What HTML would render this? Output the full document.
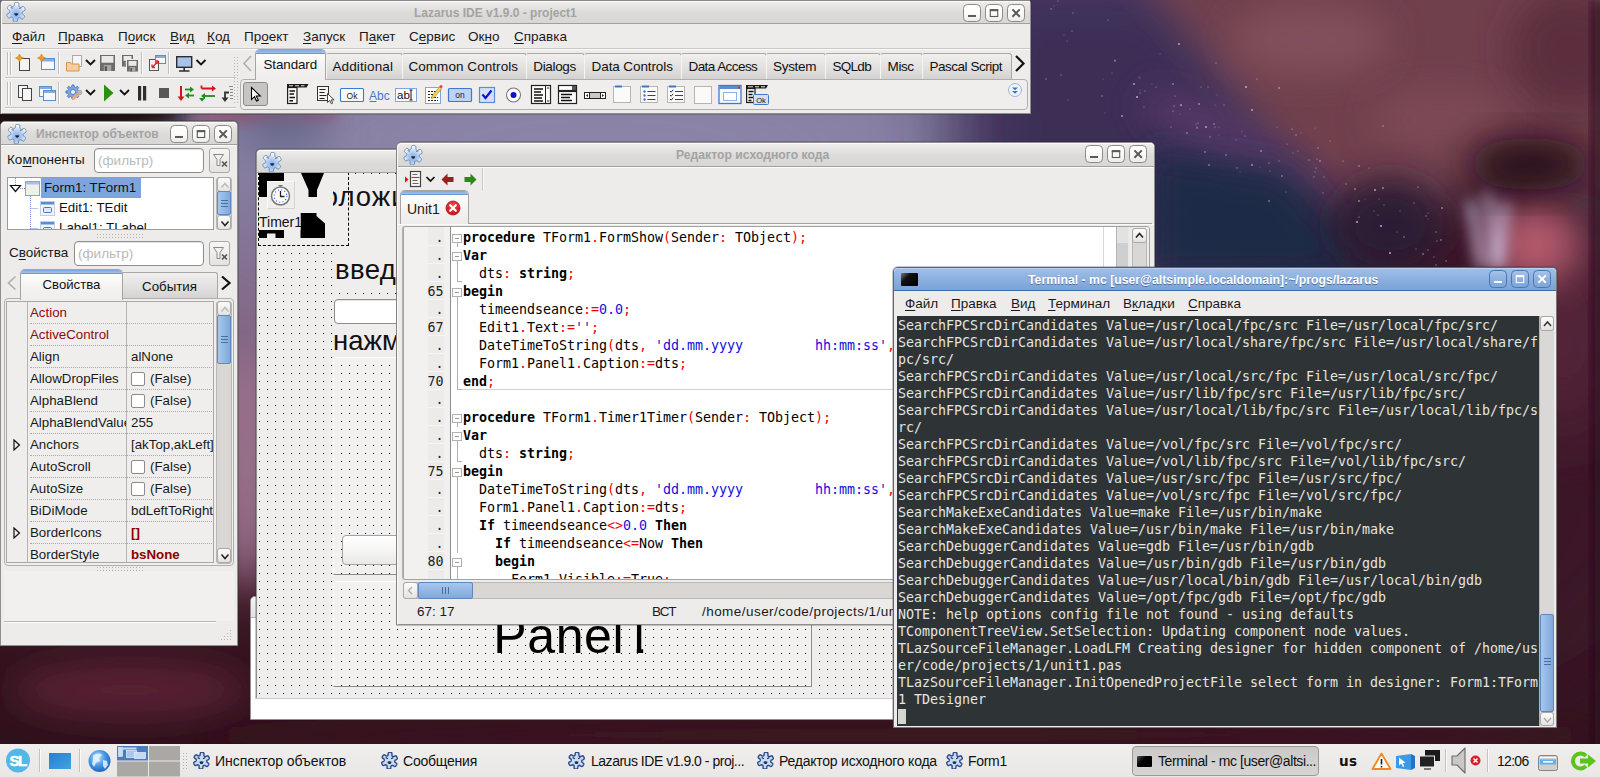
<!DOCTYPE html>
<html lang="ru">
<head>
<meta charset="utf-8">
<title>Lazarus IDE v1.9.0 - project1</title>
<style>
*{box-sizing:border-box;margin:0;padding:0}
html,body{width:1600px;height:777px;overflow:hidden}
body{position:relative;font-family:"Liberation Sans","DejaVu Sans",sans-serif;font-size:13.5px;color:#111;background:#2a1119}
.abs{position:absolute}
u{text-decoration:underline;text-underline-offset:2px}
/* wallpaper */
#wall{position:absolute;left:0;top:0;width:1600px;height:777px;overflow:hidden;background:#2a1119}
/* generic window */
.win{position:absolute;background:#edeceb;border:1px solid #8f8f8f;border-radius:5px 5px 0 0;box-shadow:0 0 0 1px rgba(40,40,40,.25)}
.tb{position:absolute;left:0;top:0;right:0;height:23px;border-radius:4px 4px 0 0;background:linear-gradient(#efeeec 0,#dcdbd9 55%,#d8d7d5 100%);border-bottom:1px solid #a3a09b;box-shadow:inset 0 1px 0 #fbfbfa}
.tt{position:absolute;left:0;right:0;top:4px;text-align:center;font-weight:bold;font-size:12.5px;color:#a3a3a3;white-space:nowrap}
.wb{color:#5a5a5a;position:absolute;top:3px;width:18px;height:18px;border:1px solid #8d8a85;border-radius:4.500px;background:linear-gradient(#ffffff,#fbfbfa 50%,#ecebea)}
.wb svg{position:absolute;left:0;top:0}
.lz{position:absolute;width:20px;height:20px}

.tmenu span{position:absolute;top:3px;font-size:13.5px;color:#1a1a1a;white-space:nowrap}
#tscr pre{position:absolute;left:1px;top:1px;font-family:"DejaVu Sans Mono","Liberation Mono",monospace;font-size:13.33px;line-height:17px;letter-spacing:-0.0243px;color:#e4e4e2;white-space:pre}
.cur{background:#d3d7cf}
.sbtn{position:absolute;left:0;width:14px;height:15px;border:1px solid #a9a8a6;border-radius:3px;background:linear-gradient(#fcfcfc,#e4e3e2)}
.sbtn svg{position:absolute;left:0;top:0}

#code .cl{position:absolute;left:0;height:18px;width:699px;white-space:pre;font-family:"DejaVu Sans Mono","Liberation Mono",monospace;font-size:13.33px;line-height:18px;letter-spacing:-0.0243px;color:#000}
#code em{position:absolute;left:0;width:39.500px;text-align:right;font-style:normal;color:#222}
#code tt{position:absolute;left:59px;font-family:inherit}
#code i{font-style:normal}
#code i.s{color:#f00000}
#code i.n,#code i.q{color:#1010e0}
#code s{position:absolute;text-decoration:none}
#code s.fb{left:48px;top:5px;width:9.500px;height:9.500px;border:1px solid #b0b0b0;background:#fff}
#code s.fb:after{content:"";position:absolute;left:3.500px;top:8px;width:1px;height:4px;background:#b0b0b0}
#code s.fb:before{content:"";position:absolute;left:1.500px;top:3.200px;width:4.500px;height:1px;background:#999}
#code s.fl{left:52.500px;top:0;width:1px;height:18px;background:#b0b0b0}
#code s.fe{left:52.500px;top:0;width:5.500px;height:17px;border-left:1px solid #b0b0b0;border-bottom:1px solid #b0b0b0}
.sbar span{position:absolute;top:4px;font-size:13.5px;color:#1a1a1a;white-space:nowrap}

.mmenu span{position:absolute;top:4px;font-size:13.5px;color:#1a1a1a;white-space:nowrap}
.ptab{position:absolute;top:53px;height:26px;border:1px solid #a9a8a6;border-bottom:0;border-left-color:#f4f4f3;border-radius:3px 3px 0 0;background:linear-gradient(#f1f0ef,#dddcda 70%,#d3d2d0);font-size:13.5px;line-height:25px;text-align:left;color:#111;white-space:nowrap;z-index:1}

.lb{font-size:13.5px;color:#1a1a1a;white-space:nowrap}
.inp{border:1px solid #8f8e8c;border-radius:4px;background:#fff;box-shadow:inset 0 1px 1px rgba(0,0,0,.12)}
.inp span{position:absolute;left:3px;top:4px;font-size:13.5px;color:#b9b9b9}
.fbtn{border:1px solid #a9a8a6;border-radius:3px;background:linear-gradient(#f6f6f5,#e4e3e2)}
.fbtn svg{position:absolute;left:0;top:0}
.tv{font-size:13.3px;color:#111;white-space:nowrap;line-height:18px}
.dots{background-image:radial-gradient(circle,#b5b4b2 .6px,transparent .8px);background-size:3px 3px}
.pr{position:absolute;left:0;width:208px;height:22px;font-size:13.3px;line-height:21px;color:#1a1a1a;white-space:nowrap}
.pr .pn{position:absolute;left:23px;top:0;width:96px;height:22px;overflow:hidden;border-bottom:1px dotted #aaa9a7}
.pr .pn.red{color:#8e0c0c}
.pr .pv{position:absolute;left:120px;top:0;width:87px;height:22px;overflow:hidden;padding-left:4px;border-bottom:1px dotted #aaa9a7}
.pr .rd{color:#8b0000}
.cb{position:absolute;left:4px;top:4px;width:14px;height:14px;border:1px solid #8c8b89;border-radius:2px;background:#fff;text-decoration:none}

.gdots{background-image:linear-gradient(#000,#000);background-size:1px 1px;background-repeat:no-repeat;background-image:radial-gradient(circle at .5px .5px,#000 .55px,rgba(0,0,0,0) .75px);background-size:8px 8px;background-repeat:repeat;background-color:#efeeed}
.big{font-size:27.5px;line-height:34px;color:#111;white-space:nowrap}

.tk{position:absolute;top:8px;font-size:14px;line-height:18px;color:#111;white-space:nowrap}
</style>
</head>
<body>
<div id="wall"><svg width="1600" height="777" viewBox="0 0 1600 777">
<defs>
<filter id="b80" x="-50%" y="-50%" width="200%" height="200%"><feGaussianBlur stdDeviation="70"/></filter>
<filter id="b40" x="-50%" y="-50%" width="200%" height="200%"><feGaussianBlur stdDeviation="36"/></filter>
<filter id="b20" x="-50%" y="-50%" width="200%" height="200%"><feGaussianBlur stdDeviation="18"/></filter>
<filter id="b12" x="-50%" y="-50%" width="200%" height="200%"><feGaussianBlur stdDeviation="11"/></filter>
<filter id="b5" x="-50%" y="-50%" width="200%" height="200%"><feGaussianBlur stdDeviation="4.500"/></filter>
<filter id="b8" x="-50%" y="-50%" width="200%" height="200%"><feGaussianBlur stdDeviation="7"/></filter>
<linearGradient id="wbase" x1="0" y1="0" x2="0" y2="1"><stop offset="0" stop-color="#6b5f8c"/><stop offset=".2" stop-color="#7f789b"/><stop offset=".5" stop-color="#84607f"/><stop offset=".72" stop-color="#4a2334"/><stop offset=".85" stop-color="#32121d"/><stop offset="1" stop-color="#2c1019"/></linearGradient>
</defs>
<rect width="1600" height="777" fill="url(#wbase)"/>
<ellipse cx="600" cy="150" rx="400" ry="120" fill="#8c85a7" filter="url(#b80)"/>
<ellipse cx="40" cy="112" rx="150" ry="30" fill="#1e0811" filter="url(#b12)"/>
<ellipse cx="265" cy="114" rx="75" ry="9" fill="#94506a" filter="url(#b8)"/>
<ellipse cx="285" cy="128" rx="45" ry="22" fill="#66678a" filter="url(#b20)"/>
<ellipse cx="1420" cy="420" rx="330" ry="330" fill="#3b1626" filter="url(#b80)"/>
<ellipse cx="246" cy="470" rx="26" ry="120" fill="#9c748f" filter="url(#b20)"/>
<ellipse cx="130" cy="690" rx="120" ry="28" fill="#5a2434" filter="url(#b20)"/>
<ellipse cx="900" cy="735" rx="700" ry="14" fill="#3d1824" filter="url(#b12)"/>
<path d="M960 -40h230l150 260-240 80h-150z" fill="#3c2d57" filter="url(#b40)"/>
<path d="M1105 -60h545v260l-150-40-60 50-125-15-70-95z" fill="#70404d" filter="url(#b20)"/>
<ellipse cx="1570" cy="50" rx="60" ry="60" fill="#5c2d3c" filter="url(#b20)"/>
<ellipse cx="1440" cy="120" rx="70" ry="30" fill="#7e4a57" filter="url(#b20)"/>
<ellipse cx="1240" cy="150" rx="110" ry="22" fill="#5b3b69" filter="url(#b20)" transform="rotate(28 1240 150)"/>
<ellipse cx="1310" cy="40" rx="80" ry="35" fill="#82505c" filter="url(#b20)"/>
<ellipse cx="1565" cy="330" rx="45" ry="110" fill="#5a273c" filter="url(#b40)"/>
<path d="M1150 150l140 20 90 110h-230z" fill="#1b2b47" filter="url(#b20)"/>
<ellipse cx="1390" cy="225" rx="55" ry="45" fill="#291a36" filter="url(#b20)"/>
<ellipse cx="1535" cy="245" rx="45" ry="40" fill="#b25a6c" filter="url(#b20)"/>
<path d="M1470 200l12 68M1488 190l8 80M1506 200l-6 68" stroke="#d0c4e6" stroke-width="8" fill="none" opacity=".85" filter="url(#b8)"/>
<ellipse cx="1530" cy="164" rx="62" ry="26" fill="#260c19" filter="url(#b20)"/>
<rect x="1593" y="0" width="10" height="777" fill="#2a0f1a" filter="url(#b8)"/>
<g fill="#d9c8ee"><circle cx="1197" cy="127" r="0.5" opacity="0.8"/><circle cx="1152" cy="84" r="0.6" opacity="0.4"/><circle cx="1224" cy="105" r="0.6" opacity="0.7"/><circle cx="1316" cy="168" r="0.5" opacity="0.9"/><circle cx="1073" cy="13" r="0.6" opacity="0.7"/><circle cx="1245" cy="136" r="0.5" opacity="0.7"/><circle cx="1286" cy="192" r="0.5" opacity="0.7"/><circle cx="1269" cy="163" r="0.7" opacity="0.6"/><circle cx="1416" cy="249" r="0.6" opacity="0.7"/><circle cx="1115" cy="61" r="0.7" opacity="0.8"/><circle cx="1173" cy="84" r="0.9" opacity="0.5"/><circle cx="1208" cy="87" r="0.5" opacity="0.8"/><circle cx="1296" cy="135" r="0.7" opacity="0.7"/><circle cx="1237" cy="168" r="0.7" opacity="0.6"/><circle cx="1355" cy="189" r="0.9" opacity="0.5"/><circle cx="1199" cy="104" r="0.9" opacity="0.6"/><circle cx="1279" cy="161" r="0.7" opacity="0.5"/><circle cx="1105" cy="113" r="0.5" opacity="0.5"/><circle cx="1206" cy="127" r="0.9" opacity="0.8"/><circle cx="1137" cy="97" r="0.9" opacity="0.9"/><circle cx="1112" cy="73" r="0.6" opacity="0.4"/><circle cx="1397" cy="232" r="0.6" opacity="0.6"/><circle cx="1139" cy="77" r="0.5" opacity="0.6"/><circle cx="1442" cy="208" r="0.9" opacity="0.6"/><circle cx="1180" cy="114" r="0.6" opacity="0.4"/><circle cx="1140" cy="90" r="0.5" opacity="0.5"/><circle cx="1219" cy="135" r="0.5" opacity="0.4"/><circle cx="1102" cy="96" r="0.7" opacity="0.7"/><circle cx="1261" cy="151" r="0.9" opacity="0.6"/><circle cx="1197" cy="128" r="0.7" opacity="0.6"/><circle cx="1314" cy="177" r="0.7" opacity="0.5"/><circle cx="1298" cy="151" r="0.5" opacity="0.7"/><circle cx="1140" cy="93" r="0.6" opacity="0.7"/><circle cx="1359" cy="217" r="0.6" opacity="0.8"/><circle cx="1383" cy="188" r="0.9" opacity="0.6"/><circle cx="1072" cy="31" r="0.7" opacity="0.5"/><circle cx="1269" cy="201" r="0.7" opacity="0.9"/><circle cx="1196" cy="124" r="0.6" opacity="0.6"/><circle cx="1277" cy="127" r="0.5" opacity="0.6"/><circle cx="1317" cy="159" r="0.5" opacity="0.9"/><circle cx="1369" cy="168" r="0.6" opacity="0.6"/><circle cx="1359" cy="201" r="0.9" opacity="0.6"/><circle cx="1365" cy="199" r="0.6" opacity="0.4"/><circle cx="1252" cy="165" r="0.9" opacity="0.7"/><circle cx="1175" cy="96" r="0.5" opacity="0.8"/><circle cx="1378" cy="215" r="0.6" opacity="0.6"/><circle cx="1414" cy="203" r="0.7" opacity="0.5"/><circle cx="1252" cy="110" r="0.9" opacity="0.8"/><circle cx="1330" cy="141" r="0.6" opacity="0.7"/><circle cx="1287" cy="144" r="0.6" opacity="0.7"/><circle cx="1374" cy="211" r="0.5" opacity="0.7"/><circle cx="1145" cy="91" r="0.5" opacity="0.8"/><circle cx="1067" cy="41" r="0.5" opacity="0.7"/><circle cx="1279" cy="88" r="0.9" opacity="0.6"/><circle cx="1436" cy="232" r="0.7" opacity="0.6"/><circle cx="1205" cy="152" r="0.7" opacity="0.9"/><circle cx="1423" cy="254" r="0.9" opacity="0.5"/><circle cx="1242" cy="131" r="0.5" opacity="0.5"/><circle cx="1198" cy="123" r="0.7" opacity="0.5"/><circle cx="1428" cy="219" r="0.5" opacity="0.6"/><circle cx="1292" cy="129" r="0.6" opacity="0.8"/><circle cx="1436" cy="265" r="0.7" opacity="0.6"/><circle cx="1375" cy="190" r="0.9" opacity="0.8"/><circle cx="1181" cy="106" r="0.5" opacity="0.5"/><circle cx="1068" cy="100" r="0.6" opacity="0.5"/><circle cx="1046" cy="79" r="0.7" opacity="0.6"/><circle cx="1236" cy="140" r="0.7" opacity="0.4"/><circle cx="1054" cy="6" r="0.5" opacity="0.5"/><circle cx="1064" cy="35" r="0.6" opacity="0.4"/><circle cx="1381" cy="226" r="0.9" opacity="0.9"/><circle cx="1174" cy="106" r="0.6" opacity="0.9"/><circle cx="1446" cy="261" r="0.7" opacity="0.7"/><circle cx="1270" cy="171" r="0.6" opacity="0.5"/><circle cx="1384" cy="205" r="0.5" opacity="0.8"/><circle cx="1282" cy="176" r="0.9" opacity="0.5"/><circle cx="1357" cy="222" r="0.9" opacity="0.9"/><circle cx="1173" cy="111" r="0.6" opacity="0.8"/><circle cx="1320" cy="161" r="0.7" opacity="0.9"/><circle cx="1426" cy="216" r="0.7" opacity="0.6"/><circle cx="1051" cy="9" r="0.7" opacity="0.7"/><circle cx="1346" cy="184" r="0.7" opacity="0.6"/><circle cx="1216" cy="63" r="0.7" opacity="0.5"/><circle cx="1260" cy="167" r="0.5" opacity="0.4"/><circle cx="1404" cy="237" r="0.9" opacity="0.4"/><circle cx="1171" cy="127" r="0.6" opacity="0.7"/><circle cx="1359" cy="166" r="0.7" opacity="0.8"/><circle cx="1240" cy="172" r="0.6" opacity="0.4"/><circle cx="1418" cy="187" r="0.6" opacity="0.9"/><circle cx="1315" cy="172" r="0.5" opacity="0.8"/><circle cx="1315" cy="128" r="0.6" opacity="0.4"/><circle cx="1190" cy="109" r="0.5" opacity="0.7"/><circle cx="1324" cy="177" r="0.5" opacity="0.8"/><circle cx="1215" cy="127" r="0.5" opacity="0.8"/><circle cx="1257" cy="79" r="0.6" opacity="0.8"/><circle cx="1226" cy="155" r="0.7" opacity="0.8"/><circle cx="1293" cy="153" r="0.6" opacity="0.6"/><circle cx="1301" cy="133" r="0.6" opacity="0.4"/><circle cx="1061" cy="75" r="0.6" opacity="0.7"/><circle cx="1134" cy="84" r="0.9" opacity="0.8"/><circle cx="1437" cy="241" r="0.5" opacity="0.9"/><circle cx="1428" cy="250" r="0.6" opacity="0.9"/><circle cx="1441" cy="240" r="0.7" opacity="0.9"/><circle cx="1108" cy="20" r="0.5" opacity="0.8"/><circle cx="1160" cy="54" r="0.5" opacity="0.5"/><circle cx="1428" cy="213" r="0.6" opacity="0.6"/><circle cx="1214" cy="124" r="0.7" opacity="0.8"/><circle cx="1434" cy="257" r="0.5" opacity="0.9"/><circle cx="1144" cy="107" r="0.5" opacity="0.6"/><circle cx="1219" cy="127" r="0.5" opacity="0.4"/><circle cx="1309" cy="160" r="0.7" opacity="0.6"/><circle cx="1179" cy="44" r="0.9" opacity="0.8"/><circle cx="1343" cy="161" r="0.6" opacity="0.8"/><circle cx="1058" cy="1" r="0.6" opacity="0.7"/><circle cx="1215" cy="105" r="0.6" opacity="0.5"/><circle cx="1210" cy="137" r="0.7" opacity="0.6"/><circle cx="1103" cy="79" r="0.5" opacity="0.5"/><circle cx="1122" cy="116" r="0.9" opacity="0.7"/><circle cx="1209" cy="165" r="0.9" opacity="0.5"/><circle cx="1140" cy="78" r="0.5" opacity="0.6"/><circle cx="1201" cy="87" r="0.5" opacity="0.8"/><circle cx="1187" cy="133" r="0.9" opacity="0.5"/><circle cx="1323" cy="193" r="0.7" opacity="0.5"/><circle cx="1217" cy="95" r="0.6" opacity="0.4"/><circle cx="1390" cy="253" r="0.9" opacity="0.9"/><circle cx="1400" cy="211" r="0.5" opacity="0.6"/><circle cx="1383" cy="126" r="0.9" opacity="0.4"/><circle cx="1246" cy="87" r="0.9" opacity="0.9"/><circle cx="1156" cy="87" r="0.5" opacity="0.9"/><circle cx="1318" cy="148" r="0.9" opacity="0.4"/><circle cx="1379" cy="199" r="0.5" opacity="0.7"/><circle cx="1181" cy="105" r="0.9" opacity="0.7"/><circle cx="1115" cy="60" r="0.6" opacity="0.6"/></g>
</svg></div>
<svg width="0" height="0" style="position:absolute">
<defs>
<radialGradient id="lzg" cx=".5" cy=".62" r=".55"><stop offset="0" stop-color="#7fadf0"/><stop offset=".45" stop-color="#a9c8f4"/><stop offset="1" stop-color="#f4f8fe"/></radialGradient>
<g id="lazico">
<path d="M16.25 10.20L16.21 10.53L16.18 10.86L16.16 11.20L16.19 11.54L16.43 11.96L17.26 12.61L18.29 13.45L18.61 14.11L18.51 14.63L18.30 15.09L18.05 15.53L17.76 15.95L17.45 16.36L17.11 16.74L16.71 17.05L16.12 17.13L15.09 16.62L14.05 15.89L13.48 15.67L13.13 15.73L12.82 15.85L12.53 15.99L12.24 16.14L11.95 16.34L11.72 16.76L11.59 17.82L11.39 19.15L10.99 19.76L10.50 19.94L10.00 19.98L9.50 19.98L9.00 19.94L8.50 19.87L8.01 19.75L7.54 19.55L7.17 19.07L7.10 17.91L7.20 16.62L7.10 16.01L6.87 15.73L6.61 15.52L6.35 15.33L6.07 15.15L5.77 15.00L5.30 15.00L4.33 15.41L3.10 15.90L2.38 15.85L1.99 15.51L1.70 15.09L1.45 14.64L1.23 14.18L1.05 13.71L0.90 13.22L0.83 12.71L1.06 12.14L2.01 11.49L3.15 10.93L3.62 10.54L3.75 10.20L3.79 9.87L3.82 9.54L3.84 9.20L3.81 8.86L3.57 8.44L2.74 7.79L1.71 6.95L1.39 6.29L1.49 5.77L1.70 5.31L1.95 4.87L2.24 4.45L2.55 4.04L2.89 3.66L3.29 3.35L3.88 3.27L4.91 3.78L5.95 4.51L6.52 4.73L6.87 4.67L7.18 4.55L7.47 4.41L7.76 4.26L8.05 4.06L8.28 3.64L8.41 2.58L8.61 1.25L9.01 0.64L9.50 0.46L10.00 0.42L10.50 0.42L11.00 0.46L11.50 0.53L11.99 0.65L12.46 0.85L12.83 1.33L12.90 2.49L12.80 3.78L12.90 4.39L13.13 4.67L13.39 4.88L13.65 5.07L13.93 5.25L14.23 5.40L14.70 5.40L15.67 4.99L16.90 4.50L17.62 4.55L18.01 4.89L18.30 5.31L18.55 5.76L18.77 6.22L18.95 6.69L19.10 7.18L19.17 7.69L18.94 8.26L17.99 8.91L16.85 9.47L16.38 9.86z" fill="url(#lzg)" stroke="#5f82ad" stroke-width=".9" stroke-linejoin="round"/>
<ellipse cx="5.800" cy="5.800" rx="1.500" ry=".7" fill="#8a8680" transform="rotate(20 5.800 5.800)"/><ellipse cx="14.300" cy="6.200" rx="1.500" ry=".7" fill="#8a8680" transform="rotate(-20 14.300 6.200)"/>
<path d="M8 11.600q2.200-.9 4.400 0l-1 1.700q-1.200.9-2.400 0z" fill="#262019"/>
</g>
<g id="lazico2">
<path d="M16.25 10.20L16.21 10.53L16.18 10.86L16.16 11.20L16.19 11.54L16.43 11.96L17.26 12.61L18.29 13.45L18.61 14.11L18.51 14.63L18.30 15.09L18.05 15.53L17.76 15.95L17.45 16.36L17.11 16.74L16.71 17.05L16.12 17.13L15.09 16.62L14.05 15.89L13.48 15.67L13.13 15.73L12.82 15.85L12.53 15.99L12.24 16.14L11.95 16.34L11.72 16.76L11.59 17.82L11.39 19.15L10.99 19.76L10.50 19.94L10.00 19.98L9.50 19.98L9.00 19.94L8.50 19.87L8.01 19.75L7.54 19.55L7.17 19.07L7.10 17.91L7.20 16.62L7.10 16.01L6.87 15.73L6.61 15.52L6.35 15.33L6.07 15.15L5.77 15.00L5.30 15.00L4.33 15.41L3.10 15.90L2.38 15.85L1.99 15.51L1.70 15.09L1.45 14.64L1.23 14.18L1.05 13.71L0.90 13.22L0.83 12.71L1.06 12.14L2.01 11.49L3.15 10.93L3.62 10.54L3.75 10.20L3.79 9.87L3.82 9.54L3.84 9.20L3.81 8.86L3.57 8.44L2.74 7.79L1.71 6.95L1.39 6.29L1.49 5.77L1.70 5.31L1.95 4.87L2.24 4.45L2.55 4.04L2.89 3.66L3.29 3.35L3.88 3.27L4.91 3.78L5.95 4.51L6.52 4.73L6.87 4.67L7.18 4.55L7.47 4.41L7.76 4.26L8.05 4.06L8.28 3.64L8.41 2.58L8.61 1.25L9.01 0.64L9.50 0.46L10.00 0.42L10.50 0.42L11.00 0.46L11.50 0.53L11.99 0.65L12.46 0.85L12.83 1.33L12.90 2.49L12.80 3.78L12.90 4.39L13.13 4.67L13.39 4.88L13.65 5.07L13.93 5.25L14.23 5.40L14.70 5.40L15.67 4.99L16.90 4.50L17.62 4.55L18.01 4.89L18.30 5.31L18.55 5.76L18.77 6.22L18.95 6.69L19.10 7.18L19.17 7.69L18.94 8.26L17.99 8.91L16.85 9.47L16.38 9.86z" fill="#c9dbf4" stroke="#2f4f8c" stroke-width="1.700" stroke-linejoin="round"/>
<path d="M5.500 6.500l2.500 1.500M14.500 6.500l-2.500 1.500" stroke="#1c2c4c" stroke-width="1.400"/>
<path d="M7.500 11.500q2.500-1 5 0l-1 2.200q-1.500.9-3 0z" fill="#1c2c4c"/>
</g>
<g id="bmin"><rect x="4" y="10" width="8" height="2" fill="currentColor"/></g>
<g id="bmax"><rect x="4.300" y="4.800" width="7.400" height="6.700" fill="none" stroke="currentColor" stroke-width="1.100"/><rect x="3.800" y="4.200" width="8.400" height="2" fill="currentColor"/></g>
<g id="bcls"><path d="M4.400 4.400l7.400 7.400M11.800 4.400l-7.400 7.400" stroke="currentColor" stroke-width="2" fill="none"/></g>
</defs>
</svg>

<!-- MAIN -->
<div id="main" class="win" style="left:1px;top:-1px;width:1030px;height:115px;border-left-color:#f8f8f7;box-shadow:-1px 0 0 #85837f,0 0 0 1px rgba(40,40,40,.25)">
<div class="tb" style="height:24px;border-top:1px solid #8a8884;border-radius:0"><svg class="lz" style="left:4px;top:1px" viewBox="0 0 20 20"><use href="#lazico"/></svg>
<div class="tt" style="top:5px;left:412px;right:auto;font-size:12px">Lazarus IDE v1.9.0 - project1</div>
<div class="wb" style="left:961px"><svg width="17" height="17"><use href="#bmin"/></svg></div>
<div class="wb" style="left:983px"><svg width="17" height="17"><use href="#bmax"/></svg></div>
<div class="wb" style="left:1005px"><svg width="17" height="17"><use href="#bcls"/></svg></div>
</div>
<div class="abs mmenu" style="left:0;top:25px;width:1028px;height:24px;border-bottom:1px solid #c9c8c6"><span style="left:10px"><u>Ф</u>айл</span><span style="left:56px"><u>П</u>равка</span><span style="left:116px">П<u>о</u>иск</span><span style="left:168px"><u>В</u>ид</span><span style="left:205px"><u>К</u>од</span><span style="left:242px">Пр<u>о</u>ект</span><span style="left:301px"><u>З</u>апуск</span><span style="left:357px">П<u>а</u>кет</span><span style="left:407px">С<u>е</u>рвис</span><span style="left:466px">Ок<u>н</u>о</span><span style="left:512px"><u>С</u>правка</span></div>
<div class="abs" style="left:0;top:49px;width:1028px;height:1px;background:#fafaf9"></div>
<div class="abs" style="left:3px;top:77px;width:231px;height:1px;background:#c4c3c1;border-bottom:1px solid #f8f8f7;height:2px"></div>
<div class="abs" style="left:3px;top:107px;width:231px;height:2px;background:#c4c3c1;border-bottom:1px solid #f8f8f7"></div>
<!-- palette tabs -->
<div class="ptab" style="left:323.5px;width:77.0px;padding-left:5.9px;letter-spacing:0.14px">Additional</div><div class="ptab" style="left:399.5px;width:125.8px;padding-left:5.9px;letter-spacing:0.06px">Common Controls</div><div class="ptab" style="left:524.3px;width:58.7px;padding-left:6.0px;letter-spacing:-0.35px">Dialogs</div><div class="ptab" style="left:582.0px;width:97.8px;padding-left:6.6px;letter-spacing:-0.10px">Data Controls</div><div class="ptab" style="left:678.8px;width:86.5px;padding-left:6.7px;letter-spacing:-0.57px">Data Access</div><div class="ptab" style="left:764.3px;width:60.0px;padding-left:5.7px;letter-spacing:-0.29px">System</div><div class="ptab" style="left:823.3px;width:56.1px;padding-left:6.2px;letter-spacing:-0.71px">SQLdb</div><div class="ptab" style="left:878.4px;width:42.6px;padding-left:6.2px;letter-spacing:-0.42px">Misc</div><div class="ptab" style="left:920.0px;width:90.0px;padding-left:6.5px;letter-spacing:-0.48px">Pascal Script</div>
<div class="abs" style="left:253px;top:49px;width:71px;height:31px;border:1px solid #a5a4a2;border-bottom:0;border-radius:5px 5px 0 0;background:linear-gradient(#fdfdfd 5px,#f3f2f1 60%,#efeeed);overflow:hidden;z-index:3">
<div class="abs" style="left:0;top:0;width:71px;height:4px;background:linear-gradient(#7ea6dc,#a3c1ea);border-bottom:1px solid #6f98d0"></div>
<span class="abs" style="left:7.500px;top:7px;font-size:13.4px;letter-spacing:-.1px;color:#111">Standard</span></div>
<div class="abs" style="left:238px;top:79px;width:788px;height:31px;border:1px solid #b0afad;border-radius:4px;background:#efeeed;z-index:2"></div>
<div class="abs" style="left:241px;top:82px;width:25px;height:24px;border:1px solid #8c8b89;border-radius:3px;background:#c6c5c3;z-index:4"></div>
<svg class="abs" style="left:-2px;top:0;z-index:5" width="1032" height="114" viewBox="0 0 1032 114">
<path d="M7.500 52v23M10.500 52v23" stroke="#bdbcba" stroke-width="1"/><path d="M8.500 52v23M11.500 52v23" stroke="#fbfbfa" stroke-width="1"/>
<path d="M7.500 82v23M10.500 82v23" stroke="#bdbcba" stroke-width="1"/><path d="M8.500 82v23M11.500 82v23" stroke="#fbfbfa" stroke-width="1"/>
<path d="M58.5 52v22" stroke="#c2c1bf"/><path d="M59.5 52v22" stroke="#fafaf9"/>
<path d="M141.5 52v22" stroke="#c2c1bf"/><path d="M142.5 52v22" stroke="#fafaf9"/>
<path d="M168.5 52v22" stroke="#c2c1bf"/><path d="M169.5 52v22" stroke="#fafaf9"/>
<path d="M58.5 82v22" stroke="#c2c1bf"/><path d="M59.5 82v22" stroke="#fafaf9"/>
<g fill="#b3b2b0"><rect x="234" y="57" width="1" height="1"/><rect x="237" y="57" width="1" height="1"/><rect x="234" y="60" width="1" height="1"/><rect x="237" y="60" width="1" height="1"/><rect x="234" y="63" width="1" height="1"/><rect x="237" y="63" width="1" height="1"/><rect x="234" y="66" width="1" height="1"/><rect x="237" y="66" width="1" height="1"/><rect x="234" y="69" width="1" height="1"/><rect x="237" y="69" width="1" height="1"/><rect x="234" y="72" width="1" height="1"/><rect x="237" y="72" width="1" height="1"/><rect x="234" y="75" width="1" height="1"/><rect x="237" y="75" width="1" height="1"/><rect x="234" y="78" width="1" height="1"/><rect x="237" y="78" width="1" height="1"/><rect x="234" y="81" width="1" height="1"/><rect x="237" y="81" width="1" height="1"/><rect x="234" y="84" width="1" height="1"/><rect x="237" y="84" width="1" height="1"/><rect x="234" y="87" width="1" height="1"/><rect x="237" y="87" width="1" height="1"/><rect x="234" y="90" width="1" height="1"/><rect x="237" y="90" width="1" height="1"/><rect x="234" y="93" width="1" height="1"/><rect x="237" y="93" width="1" height="1"/><rect x="234" y="96" width="1" height="1"/><rect x="237" y="96" width="1" height="1"/><rect x="234" y="99" width="1" height="1"/><rect x="237" y="99" width="1" height="1"/><rect x="234" y="102" width="1" height="1"/><rect x="237" y="102" width="1" height="1"/></g>
<rect x="19.500" y="58.500" width="10" height="12" fill="#f4f4f4" stroke="#444"/><path d="M19.5 54l1.300 2.700 2.700 1.300-2.700 1.300-1.300 2.700-1.300-2.700-2.700-1.300 2.700-1.300z" fill="#f39a1d" stroke="#c96a00" stroke-width=".5"/>
<rect x="41.500" y="58.500" width="13" height="11" fill="#f7f9fd" stroke="#5b8ed1"/><rect x="42" y="59" width="12" height="2.500" fill="#86ace0"/><path d="M41.5 54l1.300 2.700 2.700 1.300-2.700 1.300-1.300 2.700-1.300-2.700-2.700-1.300 2.700-1.300z" fill="#f39a1d" stroke="#c96a00" stroke-width=".5"/>
<rect x="72.500" y="55.500" width="9" height="11" fill="#f6f6f6" stroke="#aaa"/><path d="M66.500 62.500h4l1 1.500h7.500v7h-12.500z" fill="#f6cf9f" stroke="#d6924a"/>
<path d="M86 60l4.500 4.500 4.500-4.500" fill="none" stroke="#111" stroke-width="1.800"/>
<rect x="100" y="55" width="15" height="16" fill="#6b6b6b"/><rect x="101.5" y="56" width="12" height="6.72" fill="#e9e9e9"/><rect x="103.75" y="64.92" width="7.5" height="6.08" fill="#a7a7a7"/><rect x="104.8" y="66.2" width="2.1" height="4.8" fill="#555"/>
<rect x="122" y="55" width="11" height="11.5" fill="#6b6b6b"/><rect x="123.5" y="56" width="8" height="4.83" fill="#e9e9e9"/><rect x="124.75" y="62.13" width="5.5" height="4.37" fill="#a7a7a7"/><rect x="125.52" y="63.05" width="1.54" height="3.4499999999999997" fill="#555"/><rect x="126" y="59" width="12" height="12.500" fill="#edeceb"/><rect x="127" y="60" width="11" height="11.5" fill="#6b6b6b"/><rect x="128.5" y="61" width="8" height="4.83" fill="#e9e9e9"/><rect x="129.75" y="67.13" width="5.5" height="4.37" fill="#a7a7a7"/><rect x="130.52" y="68.05" width="1.54" height="3.4499999999999997" fill="#555"/>
<rect x="149.500" y="59.500" width="9" height="11" fill="#f4f4f4" stroke="#555"/><rect x="155.500" y="55.500" width="10" height="8" fill="#f7f9fd" stroke="#5b8ed1"/><rect x="156" y="56" width="9" height="2" fill="#86ace0"/><path d="M152 67.500l6.500-6.500M152 67.500v-3M152 67.500h3M158.500 61v3M158.500 61h-3" stroke="#e3202a" stroke-width="1.300" fill="none"/>
<rect x="176.700" y="56.700" width="15" height="10.600" fill="#a9c4ea" stroke="#2c2c2c" stroke-width="1.400"/><path d="M184.200 67.500v3M179 71h10.500" stroke="#2c2c2c" stroke-width="1.600"/>
<path d="M196.5 60l4.500 4.500 4.500-4.500" fill="none" stroke="#111" stroke-width="1.800"/>
<rect x="18.500" y="85.500" width="9" height="12" fill="#f6f6f6" stroke="#444"/><rect x="22.500" y="88.500" width="9" height="12" fill="#f6f6f6" stroke="#444"/>
<rect x="39.500" y="86.500" width="12" height="10" fill="#f7f9fd" stroke="#5b8ed1"/><rect x="40" y="87" width="11" height="2" fill="#86ace0"/><rect x="43.500" y="90.500" width="12" height="10" fill="#f7f9fd" stroke="#5b8ed1"/><rect x="44" y="91" width="11" height="2" fill="#86ace0"/>
<path d="M80.1 91.1L80.1 92.9L78.0 93.4L77.5 94.6L78.7 96.4L77.4 97.7L75.6 96.5L74.4 97.0L73.9 99.1L72.1 99.1L71.6 97.0L70.4 96.5L68.6 97.7L67.3 96.4L68.5 94.6L68.0 93.4L65.9 92.9L65.9 91.1L68.0 90.6L68.5 89.4L67.3 87.6L68.6 86.3L70.4 87.5L71.6 87.0L72.1 84.9L73.9 84.9L74.4 87.0L75.6 87.5L77.4 86.3L78.7 87.6L77.5 89.4L78.0 90.6z" fill="#7fa6e0" stroke="#3b6fc0" stroke-width=".8"/><circle cx="73" cy="92" r="2.600" fill="#edeceb" stroke="#3b6fc0" stroke-width=".8"/><path d="M73.500 98.500l4.500-4.500" stroke="#f2a878" stroke-width="3" stroke-linecap="round"/><circle cx="79.500" cy="92.500" r="2.400" fill="#bbb" stroke="#999" stroke-width=".6"/>
<path d="M86 90l4.500 4.500 4.500-4.500" fill="none" stroke="#111" stroke-width="1.800"/>
<path d="M104 84.500v17l9.500-8.500z" fill="#2b920f"/>
<path d="M120 90l4.500 4.500 4.500-4.500" fill="none" stroke="#111" stroke-width="1.800"/>
<rect x="138" y="86" width="3.200" height="14.500" fill="#2e2e2e"/><rect x="143" y="86" width="3.200" height="14.500" fill="#2e2e2e"/>
<rect x="159" y="88" width="10" height="10" fill="#585858"/>
<path d="M181 86v12" stroke="#d1161b" stroke-width="2"/><path d="M177.500 96.500h7l-3.500 4.500z" fill="#d1161b"/><path d="M185 89.500h6" stroke="#1e8f16" stroke-width="1.800"/><path d="M190 86.500l4 3-4 3z" fill="#1e8f16"/><path d="M188 95.500h6" stroke="#1e8f16" stroke-width="1.800"/><path d="M189 92.500l-4 3 4 3z" fill="#1e8f16"/>
<path d="M201.500 85.500v3M201.500 88.500h11" stroke="#d1161b" stroke-width="1.800"/><path d="M212 85.500l4 3-4 3z" fill="#d1161b"/><path d="M204 96h11" stroke="#1e8f16" stroke-width="1.800"/><path d="M205 93l-4 3 4 3z" fill="#1e8f16"/><path d="M199 98h6l-3 3.500z" fill="#1e8f16"/>
<path d="M229 92.500h-4v6" stroke="#333" stroke-width="1.800" fill="none"/><path d="M221.500 97.500h7l-3.500 4.500z" fill="#333"/><path d="M229 86.500h4M230 89.500h3M230 92.500h3M230 95.500h3M230 98.500h3" stroke="#888" stroke-width="1"/>
<path d="M251 56l-7 7.500 7 7.500" fill="none" stroke="#b0afad" stroke-width="1.600"/>
<path d="M1016 56l7.500 7.500-7.500 7.500" fill="none" stroke="#111" stroke-width="2.200"/>
<circle cx="1015" cy="90" r="6.500" fill="#eef3fb" stroke="#9db6dc" stroke-width="1"/><path d="M1012 87.500h6l-3 2.800zM1012 91h6l-3 2.800z" fill="#3b73c7"/>
<path d="M251.500 87.500v12l3-2.800 2 4.300 1.800-.8-2-4.200h4z" fill="#fff" stroke="#000" stroke-width="1.100"/>
<path d="M287 84h21.500l-2 3.600h-19.500z" fill="#1c1c1c"/><path d="M289 85.800h4M295 85.800h4M301 85.800h3.500" stroke="#e6e6e6" stroke-width="1"/><rect x="287.600" y="87.500" width="9.400" height="16" fill="#f8f8f8" stroke="#1c1c1c" stroke-width="1.200"/><path d="M289.500 91h5.500M289.500 94h4.500M289.500 97.500h5.500M289.500 100.800h3.500" stroke="#111" stroke-width="1.600"/>
<rect x="317.500" y="86.500" width="11" height="14" fill="#f4f4f4" stroke="#333"/><path d="M319.5 89.5h6M319.5 92.5h5M319.5 95.5h7M319.5 98.5h5" stroke="#222" stroke-width="1.2"/><path d="M327.500 93.500v9l2.200-2 1.600 3.300 1.400-.7-1.600-3.200h3z" fill="#fff" stroke="#333" stroke-width=".9"/>
<rect x="340.500" y="88.500" width="23" height="13" rx="1" fill="#f7f9fd" stroke="#3f78cf" stroke-width="1.100"/><text x="352" y="98.500" font-size="8.500" text-anchor="middle" fill="#222" font-family="Liberation Sans,sans-serif">Ok</text>
<text x="369" y="100" font-size="12" fill="#3f78cf" font-family="Liberation Sans,sans-serif">Abc</text><path d="M369.500 101.500h7" stroke="#3f78cf" stroke-width="1"/>
<rect x="395.500" y="88.500" width="21" height="13" fill="#fff" stroke="#7fa6e0"/><text x="397" y="99" font-size="11.500" fill="#111" font-family="Liberation Sans,sans-serif">ab</text><path d="M411 90v10M409.500 90h3M409.500 100h3" stroke="#111" stroke-width="1"/>
<rect x="425.500" y="87.500" width="15" height="16" fill="#fff" stroke="#7fa6e0"/><path d="M428 91.500h8M428 94.500h9M428 97.500h10M428 100.500h10" stroke="#222" stroke-width="1.200" stroke-dasharray="2 1"/><path d="M432 96l7.500-9 2 1.800-7.500 9-2.600.8z" fill="#f1d35c" stroke="#a88a1c" stroke-width=".7"/><circle cx="441" cy="86.500" r="1.500" fill="#e0434a"/>
<rect x="448.500" y="88.500" width="23" height="13" rx="1" fill="#bcd3f2" stroke="#3f78cf" stroke-width="1.200"/><text x="460" y="98" font-size="8.500" text-anchor="middle" fill="#222" font-family="Liberation Sans,sans-serif">on</text>
<rect x="479.500" y="87.500" width="15" height="15" fill="#d3e0f6" stroke="#5b8ed1" stroke-width="1.200"/><path d="M482.500 94.500l3 3.500 6-7.500" fill="none" stroke="#1111cc" stroke-width="2.200"/>
<circle cx="513.500" cy="95" r="7" fill="#fff" stroke="#777" stroke-width="1.100"/><circle cx="513.500" cy="95" r="3" fill="#1111cc"/>
<rect x="531.500" y="85.500" width="19" height="18" fill="#fff" stroke="#222" stroke-width="1.200"/><path d="M545.500 85.500v18" stroke="#222"/><path d="M534 89h9M534 92h7M534 95h9M534 98h8M534 101h9" stroke="#111" stroke-width="1.5"/><path d="M546.500 88.500l1.500-1.500 1.500 1.500zM546.500 100.500l1.500 1.500 1.500-1.500z" fill="#222"/>
<rect x="558.500" y="85.500" width="18" height="5" fill="#fff" stroke="#222" stroke-width="1.200"/><rect x="572" y="86" width="4" height="4" fill="#555"/><rect x="558.500" y="91.500" width="18" height="12" fill="#fff" stroke="#222" stroke-width="1.200"/><path d="M561 94.5h11M561 97.5h9M561 100.5h11" stroke="#111" stroke-width="1.4"/>
<rect x="584.500" y="92.500" width="21" height="6" fill="#c9c9c9" stroke="#222"/><rect x="584.500" y="92.500" width="5" height="6" fill="#fff" stroke="#222"/><rect x="600.500" y="92.500" width="5" height="6" fill="#fff" stroke="#222"/><path d="M588 94l-2 1.500 2 1.500zM602 94l2 1.500-2 1.500z" fill="#222"/>
<rect x="613.5" y="86.500" width="17" height="16" fill="#fafafa" stroke="#b5b5b5"/><path d="M615 86.500h7" stroke="#3f78cf" stroke-width="2"/>
<rect x="640.5" y="86.500" width="17" height="16" fill="#fafafa" stroke="#b5b5b5"/><path d="M642 86.500h7" stroke="#3f78cf" stroke-width="2"/><g fill="#3f78cf"><circle cx="644.500" cy="91.500" r="1.200"/><circle cx="644.500" cy="95.500" r="1.200"/><circle cx="644.500" cy="99.500" r="1.200"/></g><path d="M647.500 91.500h8M647.500 95.500h8M647.500 99.500h8" stroke="#444" stroke-width="1.200"/>
<rect x="667.5" y="86.500" width="17" height="16" fill="#fafafa" stroke="#b5b5b5"/><path d="M669 86.500h7" stroke="#3f78cf" stroke-width="2"/><path d="M670 91l1.200 1.200 2-2.400M670 95l1.200 1.200 2-2.400M670 99l1.200 1.200 2-2.400" fill="none" stroke="#333" stroke-width="1"/><path d="M675 91.500h8M675 95.500h8M675 99.500h8" stroke="#444" stroke-width="1.200"/>
<rect x="694.500" y="86.500" width="17" height="17" fill="#fafafa" stroke="#b5b5b5"/>
<rect x="719" y="85.500" width="22" height="18" fill="#f7f9fd" stroke="#3f78cf" stroke-width="1.300"/><rect x="719.500" y="86" width="21" height="3" fill="#5b8ed1"/><rect x="738" y="86.500" width="2" height="2" fill="#e22"/><rect x="723.500" y="92.500" width="13" height="8" fill="#fff" stroke="#8fb0e4"/>
<path d="M746 85h22l-2 3.600h-20z" fill="#1c1c1c"/><path d="M748 86.800h5M755 86.800h4M761 86.800h4" stroke="#e6e6e6" stroke-width="1"/><rect x="746.600" y="88.500" width="8.400" height="14" fill="#f8f8f8" stroke="#1c1c1c" stroke-width="1.200"/><path d="M748.500 91.500h5M748.500 94.500h4M748.500 97.500h5M748.500 100.500h3" stroke="#111" stroke-width="1.500"/><rect x="753.500" y="94.500" width="15" height="10" rx="1" fill="#cfe0f7" stroke="#3f78cf"/><text x="761" y="102.500" font-size="7.500" text-anchor="middle" fill="#111" font-family="Liberation Sans,sans-serif">Ok</text>
</svg>

</div>

<!-- OI -->
<div id="oi" class="win" style="left:0px;top:121px;width:238px;height:525px">
<div class="tb"><svg class="lz" style="left:6px;top:2px" viewBox="0 0 20 20"><use href="#lazico"/></svg>
<div class="tt" style="left:35px;top:5px;right:auto;font-size:12px">Инспектор объектов</div>
<div class="wb" style="left:169px"><svg width="17" height="17"><use href="#bmin"/></svg></div>
<div class="wb" style="left:191px"><svg width="17" height="17"><use href="#bmax"/></svg></div>
<div class="wb" style="left:213px"><svg width="17" height="17"><use href="#bcls"/></svg></div>
</div>
<div class="abs" style="left:0;top:23px;width:235px;height:1px;background:#fbfbfa"></div>
<span class="abs lb" style="left:6px;top:30px">Ко<u>м</u>поненты</span>
<div class="abs inp" style="left:93px;top:26px;width:110px;height:25px"><span>(фильтр)</span></div>
<div class="abs fbtn" style="left:208px;top:26px;width:21px;height:25px"><svg width="20" height="22" viewBox="0 0 20 22"><path d="M3.500 5.500h10l-3.500 5v6h-3v-6z" fill="#f2f2f1" stroke="#888" stroke-width="1"/><path d="M12 12.500l5 5M17 12.500l-5 5" stroke="#555" stroke-width="1.600"/></svg></div>
<div class="abs" id="tree" style="left:6px;top:55px;width:207px;height:53px;background:#fff;border:1px solid #9c9b99;overflow:hidden">
<div class="abs" style="left:33px;top:0;width:100px;height:20px;background:#7da5db"></div>
<svg class="abs" style="left:0;top:0" width="60" height="52" viewBox="0 0 60 52">
<path d="M7.500 0v8M12 10.500h5M22.500 18v34M22.500 30.500h8M22.500 50.500h8" stroke="#6c8fd0" stroke-width="1" stroke-dasharray="1 1"/>
<path d="M2.500 7.500h10l-5 6z" fill="#fff" stroke="#111" stroke-width="1.200"/>
<rect x="17.500" y="3.500" width="14" height="14" fill="#f0f0ea" stroke="#7fa6e0"/><rect x="18" y="4" width="13" height="2.500" fill="#a5c2ec"/>
<rect x="32.500" y="23.500" width="14" height="14" fill="#f4f4f0" stroke="#7fa6e0" stroke-dasharray="1 1"/><rect x="33" y="24" width="13" height="2.500" fill="#5b8ed1"/><rect x="35.500" y="29.500" width="8" height="5" rx="1" fill="#dfe9f8" stroke="#3f78cf"/>
<rect x="32.500" y="43.500" width="14" height="14" fill="#f4f4f0" stroke="#7fa6e0" stroke-dasharray="1 1"/><rect x="33" y="44" width="13" height="2.500" fill="#5b8ed1"/><rect x="35.500" y="49.500" width="8" height="5" rx="1" fill="#dfe9f8" stroke="#3f78cf"/>
</svg>
<span class="abs tv" style="left:36px;top:1px">Form1: TForm1</span>
<span class="abs tv" style="left:51px;top:21px">Edit1: TEdit</span>
<span class="abs tv" style="left:51px;top:41px">Label1: TLabel</span>
</div>
<div class="abs" style="left:215px;top:55px;width:16px;height:53px;background:#d9d6d3;border:1px solid #b9b8b6;border-radius:3px"><div class="sbtn" style="top:-1px"><svg width="14" height="14"><path d="M3.500 9.500l3.500-4 3.500 4" fill="none" stroke="#bbb" stroke-width="1.500"/></svg></div><div class="abs" style="left:0;top:13px;width:14px;height:24px;border:1px solid #5d88c2;border-radius:2px;background:linear-gradient(90deg,#a9c6ec,#7fa8dd)"><svg class="abs" style="left:3px;top:7px" width="8" height="10"><path d="M0 1.500h7M0 4.500h7M0 7.500h7" stroke="#456fa8" stroke-width="1"/></svg></div><div class="sbtn" style="top:37px"><svg width="14" height="14"><path d="M3.500 5.500l3.500 4 3.500-4" fill="none" stroke="#222" stroke-width="1.500"/></svg></div></div>
<div class="abs dots" style="left:95px;top:111px;width:47px;height:5px"></div>
<span class="abs lb" style="left:8px;top:123px">С<u>в</u>ойства</span>
<div class="abs inp" style="left:73px;top:119px;width:130px;height:25px"><span>(фильтр)</span></div>
<div class="abs fbtn" style="left:208px;top:119px;width:21px;height:25px"><svg width="20" height="22" viewBox="0 0 20 22"><path d="M3.500 5.500h10l-3.500 5v6h-3v-6z" fill="#f2f2f1" stroke="#888" stroke-width="1"/><path d="M12 12.500l5 5M17 12.500l-5 5" stroke="#555" stroke-width="1.600"/></svg></div>
<svg class="abs" style="left:5px;top:153px" width="12" height="16"><path d="M9.500 1.500l-7 6.500 7 6.500" fill="none" stroke="#b0afad" stroke-width="1.600"/></svg>
<svg class="abs" style="left:219px;top:153px" width="12" height="16"><path d="M2 1.500l7.500 6.500-7.500 6.500" fill="none" stroke="#111" stroke-width="2.200"/></svg>
<div class="ptab" style="left:120px;top:150px;width:97px;height:27px;line-height:27px;text-align:center;font-size:13.3px">События</div>
<div class="abs" style="left:19px;top:147px;width:103px;height:31px;border:1px solid #a5a4a2;border-bottom:0;border-radius:5px 5px 0 0;background:linear-gradient(#fdfdfd 5px,#f3f2f1 60%,#efeeed);overflow:hidden;z-index:3;text-align:center;font-size:13.2px;line-height:30px;color:#111">
<div class="abs" style="left:0;top:0;width:103px;height:4px;background:linear-gradient(#7ea6dc,#a3c1ea);border-bottom:1px solid #6f98d0"></div>Свойства</div>
<div class="abs" style="left:3px;top:176px;width:230px;height:268px;border:1px solid #b0afad;border-radius:4px;background:#efeeed;z-index:2"></div>
<div class="abs" id="grid" style="left:5px;top:179px;width:208px;height:262px;border:1px solid #a9a8a6;background:#efeeed;overflow:hidden;z-index:4">
<div class="abs" style="left:20px;top:0;width:1px;height:262px;background:#b5b4b2"></div>
<div class="abs" style="left:119px;top:0;width:1px;height:262px;background:#b5b4b2"></div>
<div class="pr" style="top:0px"><div class="pn red">Action</div><div class="pv"></div></div>
<div class="pr" style="top:22px"><div class="pn red">ActiveControl</div><div class="pv"></div></div>
<div class="pr" style="top:44px"><div class="pn">Align</div><div class="pv">alNone</div></div>
<div class="pr" style="top:66px"><div class="pn">AllowDropFiles</div><div class="pv"><s class="cb"></s><span style="margin-left:19px">(False)</span></div></div>
<div class="pr" style="top:88px"><div class="pn">AlphaBlend</div><div class="pv"><s class="cb"></s><span style="margin-left:19px">(False)</span></div></div>
<div class="pr" style="top:110px"><div class="pn">AlphaBlendValue</div><div class="pv">255</div></div>
<div class="pr" style="top:132px"><svg class="abs" style="left:6px;top:5px" width="8" height="12"><path d="M1 1l5.500 5-5.500 5z" fill="none" stroke="#111" stroke-width="1.200"/></svg><div class="pn">Anchors</div><div class="pv">[akTop,akLeft]</div></div>
<div class="pr" style="top:154px"><div class="pn">AutoScroll</div><div class="pv"><s class="cb"></s><span style="margin-left:19px">(False)</span></div></div>
<div class="pr" style="top:176px"><div class="pn">AutoSize</div><div class="pv"><s class="cb"></s><span style="margin-left:19px">(False)</span></div></div>
<div class="pr" style="top:198px"><div class="pn">BiDiMode</div><div class="pv">bdLeftToRight</div></div>
<div class="pr" style="top:220px"><svg class="abs" style="left:6px;top:5px" width="8" height="12"><path d="M1 1l5.500 5-5.500 5z" fill="none" stroke="#111" stroke-width="1.200"/></svg><div class="pn">BorderIcons</div><div class="pv"><b class='rd'>[]</b></div></div>
<div class="pr" style="top:242px"><div class="pn">BorderStyle</div><div class="pv"><b class='rd'>bsNone</b></div></div>
</div>
<div class="abs" style="left:215px;top:179px;width:16px;height:263px;background:#d9d6d3;border:1px solid #b9b8b6;border-radius:3px;z-index:4"><div class="sbtn" style="top:-1px"><svg width="14" height="14"><path d="M3.500 9.500l3.500-4 3.500 4" fill="none" stroke="#bbb" stroke-width="1.500"/></svg></div><div class="abs" style="left:0;top:13px;width:14px;height:49px;border:1px solid #5d88c2;border-radius:2px;background:linear-gradient(90deg,#a9c6ec,#7fa8dd)"><svg class="abs" style="left:3px;top:19px" width="8" height="10"><path d="M0 1.500h7M0 4.500h7M0 7.500h7" stroke="#456fa8" stroke-width="1"/></svg></div><div class="sbtn" style="top:246px"><svg width="14" height="14"><path d="M3.500 5.500l3.500 4 3.500-4" fill="none" stroke="#222" stroke-width="1.500"/></svg></div></div>
<div class="abs dots" style="left:95px;top:444px;width:47px;height:5px;z-index:5"></div>
<div class="abs" style="left:3px;top:449px;width:230px;height:50px;background:#f1f0ef"></div>
<div class="abs" style="left:3px;top:499px;width:212px;height:1px;background:#b9b8b6"></div>
<div class="abs" style="left:3px;top:500px;width:212px;height:1px;background:#fafaf9"></div>
<svg class="abs" style="left:220px;top:508px" width="12" height="12"><g fill="#b3b2b0"><rect x="9" y="0" width="1" height="1"/><rect x="6" y="3" width="1" height="1"/><rect x="9" y="3" width="1" height="1"/><rect x="3" y="6" width="1" height="1"/><rect x="6" y="6" width="1" height="1"/><rect x="9" y="6" width="1" height="1"/><rect x="0" y="9" width="1" height="1"/><rect x="3" y="9" width="1" height="1"/><rect x="6" y="9" width="1" height="1"/><rect x="9" y="9" width="1" height="1"/></g></svg>

</div>

<!-- MESSAGES (behind) -->
<div id="msg" class="abs" style="left:250px;top:596px;width:905px;height:124px;background:#fff;border:1px solid #8f8f8f;border-radius:5px 5px 0 0;overflow:hidden"><div class="abs" style="left:0;top:0;width:905px;height:21px;background:linear-gradient(#f3f3f2,#e3e2e1);border-bottom:1px solid #b9b8b6"></div></div>

<!-- FORM1 -->
<div id="form" class="win" style="left:256px;top:149px;width:899px;height:549px">
<div class="tb" style="height:23px"><svg class="lz" style="left:5px;top:2px" viewBox="0 0 20 20"><use href="#lazico"/></svg></div>
<div class="abs" id="fc" style="left:0;top:23px;width:897px;height:525px;overflow:hidden">
<div class="abs gdots" style="left:0;top:0;width:897px;height:525px;background-position:2px 0"></div>
<!-- labels -->
<div class="abs" style="left:92px;top:5px;width:805px;height:68px;background:#efeeed"></div>
<div class="abs" style="left:76px;top:74px;width:821px;height:44px;background:#efeeed;overflow:hidden"><span class="abs big" style="left:2px;top:5.5px;letter-spacing:.4px">введите</span></div>
<div class="abs" style="left:77px;top:126px;width:300px;height:25px;background:#fff;border:1px solid #8f8e8c;border-radius:4px;box-shadow:inset 0 1px 1px rgba(0,0,0,.12)"></div>
<div class="abs" style="left:76px;top:151px;width:821px;height:33px;background:#efeeed;overflow:hidden"><span class="abs big" style="left:0px;top:0px">нажмите</span></div>
<!-- panel A -->
<div class="abs gdots" style="left:76px;top:184px;width:479px;height:218px;background-color:#f2f1f0;border-left:1px solid #fff;border-top:1px solid #fff;border-bottom:1px solid #8e8d8b;border-right:1px solid #8e8d8b;background-position:7px 7px"></div>
<div class="abs" style="left:85px;top:362px;width:240px;height:30px;border:1px solid #a3a2a0;border-radius:4px;background:linear-gradient(#fff,#f6f6f5 50%,#e9e8e7)"></div>
<!-- panel B -->
<div class="abs gdots" style="left:76px;top:408px;width:479px;height:106px;background-color:#f2f1f0;border-left:1px solid #fff;border-top:1px solid #fff;border-bottom:1px solid #8e8d8b;border-right:1px solid #8e8d8b;background-position:7px 7px;text-align:center;overflow:hidden"><span class="abs" style="left:0;width:478px;top:24.500px;font-size:50px;line-height:58px;color:#000;text-align:center;margin-left:0px;letter-spacing:.6px">Panel<span style="display:inline-block;clip-path:inset(0 9.500px 0 12.500px)">1</span></span></div>
<!-- timer glitch area -->
<div class="abs" style="left:1px;top:-1px;width:91px;height:74px;background:#efeeed"></div>
<div class="abs" style="left:76px;top:5px;width:821px;height:68px;overflow:hidden"><span class="abs big" style="left:-31px;top:2.3px;letter-spacing:1px">Положите</span></div>
<div class="abs" style="left:1px;top:-1px;width:91px;height:74px;border:1px dashed #000"></div>
<svg class="abs" style="left:0;top:0" width="95" height="76" viewBox="257 173 95 76">
<path d="M259 173h25v24h-25z" fill="#000"/>
<path d="M301 173h23l-7 17v7h-8.500v-7z" fill="#000"/>
<path d="M300.500 213h16v3l8.500 7.500v14.500h-24.500z" fill="#000"/>
<path d="M259 230h25v8h-8.500v-4.500h-8.500v4.500h-8z" fill="#000"/>
<rect x="267.500" y="181.500" width="27" height="27" fill="#efeeed" stroke="#f9f9f8"/>
<path d="M294.500 181.500v27h-27" fill="none" stroke="#d4d3d1"/>
<circle cx="280.500" cy="196" r="9" fill="#fff" stroke="#777" stroke-width="1.500"/>
<circle cx="280.500" cy="196" r="6.300" fill="none" stroke="#1c6bf0" stroke-width="1.200" stroke-dasharray="1 2.300"/>
<path d="M280.500 191v5.500h4" fill="none" stroke="#222" stroke-width="1.300"/>
<path d="M278.500 185.500h4M280.500 185.500v1.500" stroke="#777" stroke-width="1.200"/>
<rect x="259" y="213" width="41.500" height="17" fill="#efeeed"/>
</svg>
<span class="abs" style="left:2px;top:40px;font-size:14px;line-height:18px;color:#111">Timer1</span>
</div>

</div>

<!-- SRC -->
<div id="src" class="win" style="left:397px;top:142px;width:758px;height:483px;border-left-color:#f8f8f7;box-shadow:-1px 0 0 #85837f,0 0 0 1px rgba(40,40,40,.25)">
<div class="tb" style="height:24px"><svg class="lz" style="left:5px;top:2px" viewBox="0 0 20 20"><use href="#lazico"/></svg>
<div class="tt" style="top:5px;left:278px;right:auto;font-size:12.2px">Редактор исходного кода</div>
<div class="wb" style="left:687px;top:2px"><svg width="17" height="17"><use href="#bmin"/></svg></div>
<div class="wb" style="left:709px;top:2px"><svg width="17" height="17"><use href="#bmax"/></svg></div>
<div class="wb" style="left:731px;top:2px"><svg width="17" height="17"><use href="#bcls"/></svg></div>
</div>
<div class="abs" style="left:0;top:24px;width:756px;height:1px;background:#fbfbfa"></div>
<svg class="abs" style="left:6px;top:27px" width="84" height="20" viewBox="0 0 84 20">
<path d="M1 6.500l3.500 3-3.500 3z" fill="#d11"/>
<rect x="6.500" y="1.500" width="10" height="15" fill="#fafafa" stroke="#444" stroke-width="1.200"/>
<path d="M8.500 4.500h5M8.500 10.500h5M8.500 13.500h6" stroke="#666" stroke-width="1"/><path d="M7.500 7.500h8" stroke="#e22" stroke-width="1.200"/>
<path d="M22.500 7l4 4 4-4" fill="none" stroke="#111" stroke-width="1.700"/>
<path d="M37.500 9.500l6-6v3.600h6v4.800h-6v3.600z" fill="#9c1d1d"/>
<path d="M72.500 9.500l-6-6v3.600h-6v4.800h6v3.600z" fill="#2a8a17"/>
</svg>
<div class="abs" style="left:84px;top:25px;width:1px;height:23px;background:#c9c8c6;border-right:1px solid #f8f8f7;width:2px"></div>
<div class="abs" style="left:2px;top:47px;width:69px;height:34px;border:1px solid #a5a4a2;border-bottom:0;border-radius:5px 5px 0 0;background:linear-gradient(#fdfdfd 5px,#f3f2f1 60%,#edeceb);overflow:hidden;z-index:2">
<div class="abs" style="left:0;top:0;width:69px;height:4px;background:linear-gradient(#7ea6dc,#a3c1ea);border-bottom:1px solid #6f98d0"></div>
<span class="abs" style="left:6px;top:10px;font-size:14px;color:#1a1a1a">Unit1</span>
<svg class="abs" style="left:44px;top:9px" width="16" height="16"><defs><radialGradient id="rg1" cx=".5" cy=".3" r=".7"><stop offset="0" stop-color="#f0464a"/><stop offset="1" stop-color="#c4161c"/></radialGradient></defs><circle cx="8" cy="8" r="7" fill="url(#rg1)" stroke="#b01217" stroke-width=".8"/><path d="M5.200 5.200l5.600 5.600M10.800 5.200l-5.600 5.600" stroke="#fff" stroke-width="2.200" stroke-linecap="round"/></svg>
</div>
<div class="abs" style="left:71px;top:80px;width:683px;height:1px;background:#a5a4a2"></div>
<div class="abs" style="left:0;top:81px;width:756px;height:1px;background:#f9f9f8"></div>
<div class="abs" id="edfr" style="left:5px;top:83px;width:747px;height:354px;border:1px solid #a3a2a0;border-radius:3px;background:#fff;overflow:hidden;box-shadow:-1px 0 0 #b5b4b2">
<div class="abs" style="left:0;top:0;width:46px;height:352px;background:#f2f1f0"></div>
<div class="abs" style="left:24px;top:0;width:16px;height:352px;background:repeating-linear-gradient(#ecebea 0,#ecebea 17px,#f6f6f5 17px,#f6f6f5 18px);background-position:0 1px"></div>
<div class="abs" style="left:46px;top:0;width:1px;height:352px;background:#8c8c8c"></div>
<div class="abs" style="left:699px;top:0;width:1px;height:352px;background:#d8d8d8"></div>
<div class="abs" style="left:712px;top:0;width:13px;height:352px;background:#cfcfcf;border-left:1px solid #b5b5b5;border-right:1px solid #e8e8e8"></div>
<div class="abs" style="left:713px;top:0;width:11px;height:16px;background:#e2e2e2"></div>
<div class="abs" style="left:725px;top:0;width:20px;height:352px;background:#edeceb"></div>
<div class="abs" style="left:728px;top:1px;width:15px;height:350px;background:#d9d6d3;border:1px solid #b9b8b6;border-radius:3px"></div>
<div class="sbtn" style="left:728px;top:1px;width:15px;height:15px"><svg width="13" height="14"><path d="M3 8.500l3.500-4 3.500 4" fill="none" stroke="#222" stroke-width="1.600"/></svg></div>
<div class="abs" style="left:58px;top:162px;width:641px;height:1px;background:#d0d0d0"></div>
<div id="code" class="abs" style="left:0;top:1.500px;width:699px;height:352px">
<div class="cl" style="top:0px"><em>.</em><s class="fb"></s><tt><b>procedure</b> TForm1<i class="s">.</i>FormShow<i class="s">(</i>Sender<i class="s">:</i> TObject<i class="s">);</i></tt></div>
<div class="cl" style="top:18px"><em>.</em><s class="fb"></s><tt><b>Var</b></tt></div>
<div class="cl" style="top:36px"><em>.</em><s class="fe"></s><tt>  dts<i class="s">:</i> <b>string</b><i class="s">;</i></tt></div>
<div class="cl" style="top:54px"><em>65</em><s class="fb"></s><tt><b>begin</b></tt></div>
<div class="cl" style="top:72px"><em>.</em><s class="fl"></s><tt>  timeendseance<i class="s">:=</i><i class="n">0.0</i><i class="s">;</i></tt></div>
<div class="cl" style="top:90px"><em>67</em><s class="fl"></s><tt>  Edit1<i class="s">.</i>Text<i class="s">:=</i><i class="q">''</i><i class="s">;</i></tt></div>
<div class="cl" style="top:108px"><em>.</em><s class="fl"></s><tt>  DateTimeToString<i class="s">(</i>dts<i class="s">,</i> <i class="q">'dd.mm.yyyy         hh:mm:ss'</i><i class="s">,</i></tt></div>
<div class="cl" style="top:126px"><em>.</em><s class="fl"></s><tt>  Form1<i class="s">.</i>Panel1<i class="s">.</i>Caption<i class="s">:=</i>dts<i class="s">;</i></tt></div>
<div class="cl" style="top:144px"><em>70</em><s class="fe"></s><tt><b>end</b><i class="s">;</i></tt></div>
<div class="cl" style="top:162px"><em>.</em><tt></tt></div>
<div class="cl" style="top:180px"><em>.</em><s class="fb"></s><tt><b>procedure</b> TForm1<i class="s">.</i>Timer1Timer<i class="s">(</i>Sender<i class="s">:</i> TObject<i class="s">);</i></tt></div>
<div class="cl" style="top:198px"><em>.</em><s class="fb"></s><tt><b>Var</b></tt></div>
<div class="cl" style="top:216px"><em>.</em><s class="fe"></s><tt>  dts<i class="s">:</i> <b>string</b><i class="s">;</i></tt></div>
<div class="cl" style="top:234px"><em>75</em><s class="fb"></s><tt><b>begin</b></tt></div>
<div class="cl" style="top:252px"><em>.</em><s class="fl"></s><tt>  DateTimeToString<i class="s">(</i>dts<i class="s">,</i> <i class="q">'dd.mm.yyyy         hh:mm:ss'</i><i class="s">,</i></tt></div>
<div class="cl" style="top:270px"><em>.</em><s class="fl"></s><tt>  Form1<i class="s">.</i>Panel1<i class="s">.</i>Caption<i class="s">:=</i>dts<i class="s">;</i></tt></div>
<div class="cl" style="top:288px"><em>.</em><s class="fl"></s><tt>  <b>If</b> timeendseance<i class="s">&lt;&gt;</i><i class="n">0.0</i> <b>Then</b></tt></div>
<div class="cl" style="top:306px"><em>.</em><s class="fl"></s><tt>    <b>If</b> timeendseance<i class="s">&lt;=</i>Now <b>Then</b></tt></div>
<div class="cl" style="top:324px"><em>80</em><s class="fb"></s><tt>    <b>begin</b></tt></div>
<div class="cl" style="top:342px"><em></em><s class="fl"></s><tt>      Form1<i class="s">.</i>Visible<i class="s">:=</i>True<i class="s">;</i></tt></div>
</div>
</div>
<div class="abs" style="left:5px;top:439px;width:750px;height:17px;background:#d9d6d3;border:1px solid #b9b8b6;border-radius:3px">
<div class="abs" style="left:-1px;top:-1px;width:15px;height:17px;border:1px solid #a9a8a6;border-radius:3px;background:linear-gradient(#fcfcfc,#e4e3e2)"><svg width="13" height="15"><path d="M8 4l-3.500 3.500 3.500 3.500" fill="none" stroke="#aaa" stroke-width="1.300"/></svg></div>
<div class="abs" style="left:14px;top:-1px;width:55px;height:17px;border:1px solid #5d88c2;border-radius:2px;background:linear-gradient(#a9c6ec,#7fa8dd)"><svg class="abs" style="left:22px;top:4px" width="10" height="8"><path d="M1.500 0v7M4.500 0v7M7.500 0v7" stroke="#456fa8" stroke-width="1"/></svg></div>
</div>
<div class="abs sbar" style="left:0;top:457px;width:756px;height:24px">
<span style="left:19px">67: 17</span><span style="left:254px;letter-spacing:-.8px">ВСТ</span><span style="left:304px;letter-spacing:.45px">/home/user/code/projects/1/unit1.pas</span>
</div>

</div>

<!-- TERM -->
<div id="term" class="win" style="left:893px;top:267px;width:664px;height:461px;border-color:#3f68a2 #77767a #77767a #4a6a9a">
<div class="tb" style="background:linear-gradient(#a1c0e8,#8cb0e0 50%,#7aa3d7);border-bottom:1px solid #416dab;box-shadow:inset 0 1px 0 #b9d1f0">
<div class="abs" style="left:7px;top:5px;width:17px;height:13px;background:linear-gradient(135deg,#777 0,#111 35%,#000);border-radius:1px"></div>
<div class="tt" style="color:#fff;left:134px;top:5px;right:auto;font-size:12.25px;text-shadow:0 1px 0 rgba(40,70,120,.6)">Terminal - mc [user@altsimple.localdomain]:~/progs/lazarus</div>
<div class="wb" style="left:595px;top:2px;color:#fff;background:linear-gradient(#a6c3ea,#8db0e0 50%,#7ea6da);border-color:#4a76b2"><svg width="17" height="17"><use href="#bmin"/></svg></div>
<div class="wb" style="left:617px;top:2px;color:#fff;background:linear-gradient(#a6c3ea,#8db0e0 50%,#7ea6da);border-color:#4a76b2"><svg width="17" height="17"><use href="#bmax"/></svg></div>
<div class="wb" style="left:639px;top:2px;color:#fff;background:linear-gradient(#a6c3ea,#8db0e0 50%,#7ea6da);border-color:#4a76b2"><svg width="17" height="17"><use href="#bcls"/></svg></div>
</div>
<div class="abs tmenu" style="left:0;top:25px;width:662px;height:24px">
<span style="left:11px"><u>Ф</u>айл</span><span style="left:57px"><u>П</u>равка</span><span style="left:117px"><u>В</u>ид</span><span style="left:154px"><u>Т</u>ерминал</span><span style="left:229px">В<u>к</u>ладки</span><span style="left:294px"><u>С</u>правка</span>
</div>
<div class="abs" id="tscr" style="left:3px;top:48px;width:642px;height:410px;background:#2e3436"><pre>SearchFPCSrcDirCandidates Value=/usr/local/fpc/src File=/usr/local/fpc/src/
SearchFPCSrcDirCandidates Value=/usr/local/share/fpc/src File=/usr/local/share/f
pc/src/
SearchFPCSrcDirCandidates Value=/usr/local/src/fpc File=/usr/local/src/fpc/
SearchFPCSrcDirCandidates Value=/usr/lib/fpc/src File=/usr/lib/fpc/src/
SearchFPCSrcDirCandidates Value=/usr/local/lib/fpc/src File=/usr/local/lib/fpc/s
rc/
SearchFPCSrcDirCandidates Value=/vol/fpc/src File=/vol/fpc/src/
SearchFPCSrcDirCandidates Value=/vol/lib/fpc/src File=/vol/lib/fpc/src/
SearchFPCSrcDirCandidates Value=/usr/src/fpc File=/usr/src/fpc/
SearchFPCSrcDirCandidates Value=/vol/src/fpc File=/vol/src/fpc/
SearchMakeExeCandidates Value=make File=/usr/bin/make
SearchMakeExeCandidates Value=/usr/bin/make File=/usr/bin/make
SearchDebuggerCandidates Value=gdb File=/usr/bin/gdb
SearchDebuggerCandidates Value=/usr/bin/gdb File=/usr/bin/gdb
SearchDebuggerCandidates Value=/usr/local/bin/gdb File=/usr/local/bin/gdb
SearchDebuggerCandidates Value=/opt/fpc/gdb File=/opt/fpc/gdb
NOTE: help options config file not found - using defaults
TComponentTreeView.SetSelection: Updating component node values.
TLazSourceFileManager.LoadLFM Creating designer for hidden component of /home/us
er/code/projects/1/unit1.pas
TLazSourceFileManager.InitOpenedProjectFile select form in designer: Form1:TForm
1 TDesigner
<span class="cur"> </span></pre></div>
<div class="abs" style="left:645px;top:48px;width:15px;height:410px;background:#d9d8d6;border-left:1px solid #b5b4b2">
<div class="sbtn" style="top:0"><svg width="13" height="14"><path d="M3 9l3.500-4 3.500 4" fill="none" stroke="#333" stroke-width="1.500"/></svg></div>
<div class="sbtn" style="top:396px;height:14px"><svg width="13" height="14"><path d="M3 5l3.500 4 3.500-4" fill="none" stroke="#aaa" stroke-width="1.300"/></svg></div>
<div class="abs" style="left:0;top:298px;width:14px;height:98px;border:1px solid #5d88c2;border-radius:2px;background:linear-gradient(90deg,#a9c6ec,#7fa8dd)"><svg class="abs" style="left:3px;top:42px" width="8" height="10"><path d="M0 1.500h7M0 4.500h7M0 7.500h7" stroke="#456fa8" stroke-width="1"/></svg></div>
</div>

</div>

<!-- TASKBAR -->
<div id="task" class="abs" style="left:0;top:744px;width:1600px;height:33px;background:linear-gradient(#efeeed,#e9e8e6)">
<svg class="abs" style="left:0;top:0" width="192" height="33" viewBox="0 744 192 33">
<defs><linearGradient id="dg" x1="0" y1="0" x2="1" y2="1"><stop offset="0" stop-color="#2a7fc9"/><stop offset="1" stop-color="#3fa3e6"/></linearGradient>
<radialGradient id="gg" cx=".4" cy=".35" r=".7"><stop offset="0" stop-color="#c4e4fb"/><stop offset=".55" stop-color="#3f94e4"/><stop offset="1" stop-color="#1d5fbb"/></radialGradient></defs>
<circle cx="18" cy="760.500" r="12" fill="#55b7e6"/>
<text x="17.500" y="766" font-size="15" font-weight="bold" text-anchor="middle" fill="#fff" stroke="#fff" stroke-width=".5" font-family="Liberation Sans,sans-serif" letter-spacing="-1.500">SL</text>
<path d="M39.500 749v23M79.500 749v23" stroke="#c3c2c0"/><path d="M40.500 749v23M80.500 749v23" stroke="#fafaf9"/>
<rect x="49" y="753" width="22" height="16" fill="url(#dg)"/>
<circle cx="99.500" cy="761" r="11" fill="url(#gg)"/>
<path d="M93 756c3-3 7-3 9-1l-3 3 1 3-4 2-2 4-2-3 1-4zM103 760l4 1 1 4-3 4-2-3z" fill="#e8f4fe" opacity=".85"/>
<rect x="117" y="746" width="31" height="14.500" fill="#4d7cba"/><rect x="149" y="746" width="31" height="14.500" fill="#aaa7a4"/>
<rect x="117" y="761.500" width="31" height="15" fill="#aaa7a4"/><rect x="149" y="761.500" width="31" height="15" fill="#aaa7a4"/>
<rect x="118.500" y="747.500" width="4" height="9" fill="#c9dcf5" stroke="#e9f1fc" stroke-width=".6"/><rect x="122.500" y="747.500" width="14" height="2" fill="#c9dcf5"/>
<rect x="126.500" y="750.500" width="10" height="7" fill="#a9c6ee" stroke="#e9f1fc" stroke-width=".7"/><rect x="134.500" y="752.500" width="11" height="6" fill="#c4d9f6" stroke="#e9f1fc" stroke-width=".7"/>
<g fill="#b3b2b0"><rect x="183" y="753" width="1" height="1"/><rect x="186" y="753" width="1" height="1"/><rect x="183" y="756" width="1" height="1"/><rect x="186" y="756" width="1" height="1"/><rect x="183" y="759" width="1" height="1"/><rect x="186" y="759" width="1" height="1"/><rect x="183" y="762" width="1" height="1"/><rect x="186" y="762" width="1" height="1"/><rect x="183" y="765" width="1" height="1"/><rect x="186" y="765" width="1" height="1"/><rect x="183" y="768" width="1" height="1"/><rect x="186" y="768" width="1" height="1"/></g>
</svg>
<svg class="abs" style="left:193px;top:8px" width="17" height="17" viewBox="0 0 20 20"><use href="#lazico2"/></svg><span class="tk" style="left:215px;letter-spacing:-0.04px">Инспектор объектов</span><svg class="abs" style="left:381px;top:8px" width="17" height="17" viewBox="0 0 20 20"><use href="#lazico2"/></svg><span class="tk" style="left:403px;letter-spacing:-0.22px">Сообщения</span><svg class="abs" style="left:568px;top:8px" width="17" height="17" viewBox="0 0 20 20"><use href="#lazico2"/></svg><span class="tk" style="left:591px;letter-spacing:-0.48px">Lazarus IDE v1.9.0 - proj...</span><svg class="abs" style="left:757px;top:8px" width="17" height="17" viewBox="0 0 20 20"><use href="#lazico2"/></svg><span class="tk" style="left:779px;letter-spacing:-0.23px">Редактор исходного кода</span><svg class="abs" style="left:946px;top:8px" width="17" height="17" viewBox="0 0 20 20"><use href="#lazico2"/></svg><span class="tk" style="left:968px;letter-spacing:-0.30px">Form1</span>
<div class="abs" style="left:1132px;top:2px;width:187px;height:30px;border:1px solid #9b9a98;border-radius:4px;background:linear-gradient(#cbcac8,#d6d5d3)"></div>
<div class="abs" style="left:1137px;top:12px;width:15px;height:11px;background:linear-gradient(135deg,#555,#000 40%);border-radius:1px"></div>
<span class="tk" style="left:1158px;letter-spacing:-0.42px">Terminal - mc [user@altsi...</span>
<span class="abs" style="left:1339px;top:8px;font:bold 13.5px/18px 'DejaVu Sans','Liberation Sans',sans-serif;color:#111;letter-spacing:.5px">us</span>
<svg class="abs" style="left:1366px;top:0" width="234" height="33" viewBox="1366 744 234 33">
<path d="M1381.500 753.500l9 15.500h-18z" fill="#fff" stroke="#f08a1c" stroke-width="1.800" stroke-linejoin="round"/><path d="M1381.500 759v5.500M1381.500 766v1.500" stroke="#222" stroke-width="1.600"/>
<path d="M1396 756l15-2v16l-15-2z" fill="#3b9ae8"/><path d="M1411 754l4 2v12l-4 2z" fill="#2a72c0"/><path d="M1399 757.500v8l2.200-2 1.700 3.500 1.500-.7-1.700-3.400h3z" fill="#fff"/>
<rect x="1425" y="750" width="15" height="11" fill="#1a1a1a"/><rect x="1419.500" y="756" width="15" height="11" fill="#222" stroke="#edeceb" stroke-width="1"/><path d="M1424 769h7" stroke="#555" stroke-width="1.500"/>
<path d="M1445.500 749v23M1487.500 749v23" stroke="#c3c2c0"/><path d="M1446.500 749v23M1488.500 749v23" stroke="#fafaf9"/>
<path d="M1452 756h5l8-8v25l-8-8h-5z" fill="#c9c8c6" stroke="#6d6c6a" stroke-width="1.100" stroke-linejoin="round"/>
<circle cx="1475.500" cy="760.500" r="5" fill="#d5202a"/><path d="M1473.500 758.500l4 4M1477.500 758.500l-4 4" stroke="#fff" stroke-width="1.500"/>
<rect x="1538.500" y="755.500" width="19" height="15" rx="2" fill="#cfcfcd" stroke="#858482"/><rect x="1540" y="759.500" width="16" height="5" fill="#5fb0ee"/><rect x="1543" y="761" width="10" height="1.600" fill="#fff"/><path d="M1540 757.500h16" stroke="#fff"/>
<path d="M1586 756a7.500 7.500 0 1 0 0 10" fill="none" stroke="#5cc21d" stroke-width="4"/><path d="M1580 758.500h8v-4l8 6.500-8 6.500v-4h-8z" fill="#5cc21d"/>
</svg>
<span class="tk" style="left:1497px;letter-spacing:-0.70px">12:06</span>

</div>
</body>
</html>
